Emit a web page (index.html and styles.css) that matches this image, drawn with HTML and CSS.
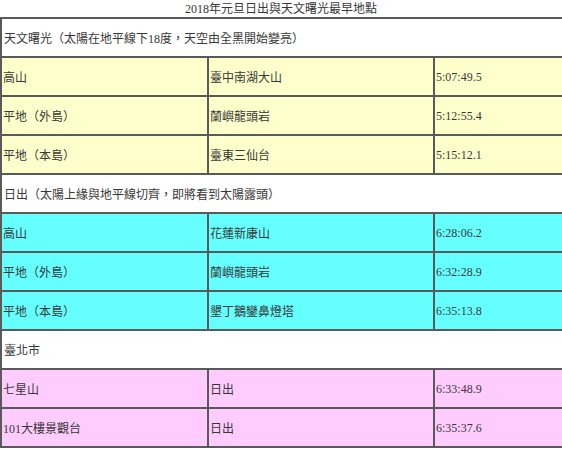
FILE: index.html
```html
<!DOCTYPE html>
<html lang="zh-Hant">
<head>
<meta charset="utf-8">
<title>2018年元旦日出與天文曙光最早地點</title>
<link rel="stylesheet" href="styles.css">
</head>
<body>
<div class="title">2018年元旦日出與天文曙光最早地點</div>
<table class="sun">
  <colgroup>
    <col class="c1"><col class="c2"><col class="c3">
  </colgroup>
  <tr class="head"><td colspan="3">天文曙光（太陽在地平線下18度，天空由全黑開始變亮）</td></tr>
  <tr class="yellow"><td>高山</td><td>臺中南湖大山</td><td>5:07:49.5</td></tr>
  <tr class="yellow"><td>平地（外島）</td><td>蘭嶼龍頭岩</td><td>5:12:55.4</td></tr>
  <tr class="yellow"><td>平地（本島）</td><td>臺東三仙台</td><td>5:15:12.1</td></tr>
  <tr class="head"><td colspan="3">日出（太陽上緣與地平線切齊，即將看到太陽露頭）</td></tr>
  <tr class="cyan"><td>高山</td><td>花蓮新康山</td><td>6:28:06.2</td></tr>
  <tr class="cyan"><td>平地（外島）</td><td>蘭嶼龍頭岩</td><td>6:32:28.9</td></tr>
  <tr class="cyan"><td>平地（本島）</td><td>墾丁鵝鑾鼻燈塔</td><td>6:35:13.8</td></tr>
  <tr class="head"><td colspan="3">臺北市</td></tr>
  <tr class="pink"><td>七星山</td><td>日出</td><td>6:33:48.9</td></tr>
  <tr class="pink"><td>101大樓景觀台</td><td>日出</td><td>6:35:37.6</td></tr>
</table>
</body>
</html>
```

FILE: styles.css
```css
html, body {
  margin: 0;
  padding: 0;
  background: #ffffff;
}
body {
  font-family: "Liberation Serif", "Noto Sans CJK TC", serif;
  font-size: 12px;
  color: #383838;
}
.title {
  height: 17px;
  line-height: 18px;
  text-align: center;
}
.sun {
  width: 562px;
  border-collapse: collapse;
  table-layout: fixed;
  border: 2px solid #5a5a5a;
}
.c1 { width: 207px; }
.c2 { width: 226px; }
.c3 { width: 129px; }
.sun td {
  border: 2px solid #5a5a5a;
  height: 36px;
  padding: 1px 0 0 1px;
  box-sizing: content-box;
  vertical-align: middle;
  white-space: nowrap;
}
.head td { background: #ffffff; padding-left: 2px; }
.yellow td { background: #ffffcc; }
.cyan td { background: #66ffff; }
.pink td { background: #ffccff; }
```
